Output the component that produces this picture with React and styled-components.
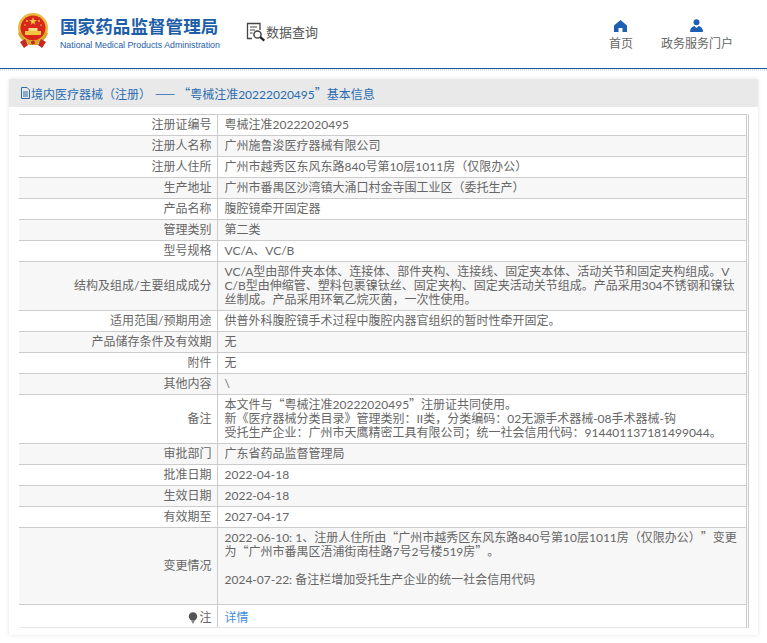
import React from 'react';
import styled, { createGlobalStyle } from 'styled-components';

const GlobalStyle = createGlobalStyle`
  html, body {
    margin: 0;
    padding: 0;
    background: #fff;
    font-family: Lato, "Noto Sans CJK SC", sans-serif;
    font-size: 12px;
    color: #666;
    text-spacing-trim: space-all;
  }
`;

const Page = styled.div`
  width: 767px;
  height: 643px;
  overflow: hidden;
`;

const Header = styled.header`
  height: 68px;
  display: flex;
  align-items: flex-start;
  border-bottom: 1px solid #1f5c9e;
`;

const DottedRule = styled.div`
  height: 2px;
  background: repeating-linear-gradient(90deg, #dfe5ec 0 1px, #fff 1px 2px);
`;

const Brand = styled.div`
  display: flex;
  align-items: flex-start;
  padding: 13px 0 0 17px;
`;

const BrandText = styled.div`
  margin: 2px 0 0 11px;
  display: flex;
  flex-direction: column;
`;

const BrandName = styled.div`
  font-size: 17.6px;
  line-height: 24px;
  font-weight: 700;
  color: #1d5ea8;
  white-space: nowrap;
`;

const BrandEn = styled.div`
  font-family: "Liberation Sans", sans-serif;
  font-size: 8.8px;
  line-height: 12px;
  color: #1d5ea8;
  white-space: nowrap;
`;

const Query = styled.div`
  display: flex;
  align-items: center;
  margin: 22px 0 0 26px;
  font-size: 13px;
  line-height: 20px;
  color: #555;
`;

const Nav = styled.nav`
  margin-left: auto;
  display: flex;
  padding: 19px 34px 0 0;
  gap: 28px;
`;

const NavItem = styled.div`
  display: flex;
  flex-direction: column;
  align-items: center;
  font-size: 12px;
  line-height: 18px;
  color: #666;
`;

const NavIcon = styled.svg`
  display: block;
  width: 13px;
  height: 13px;
  margin-bottom: 3px;
`;

const Panel = styled.section`
  margin: 8px 9px 0 9px;
  height: 556px;
  box-shadow: 0 0 4px rgba(0, 0, 0, 0.12);
  background: #fff;
`;

const PanelTitle = styled.div`
  height: 28px;
  display: flex;
  align-items: center;
  padding-left: 11px;
  background: #e9e9e9;
  color: #2a6cb0;
  font-size: 12px;
`;

const Quote = styled.span`
  font-family: "Noto Sans CJK SC", sans-serif;
  line-height: 0;
`;

const Dash = styled(Quote)`
  margin: 0 3px 0 4px;
`;

const TableWrap = styled.div`
  padding: 7px 10px 0 10px;
`;

const Table = styled.table`
  width: 730px;
  border-collapse: collapse;
  table-layout: fixed;
  border-right: 3px double #ccc;
`;

const Row = styled.tr`
  background: ${({ $striped }) => ($striped ? '#f7f7f7' : '#fff')};
`;

const Label = styled.td`
  width: 198px;
  box-sizing: border-box;
  padding: 3px 5px 3px 0;
  text-align: right;
  line-height: 14px;
  border-top: 1px solid #ccc;
  border-bottom: 1px solid #ccc;
  border-right: 1px solid #ccc;
  vertical-align: middle;
`;

const Value = styled.td`
  padding: 3px 6px 3px 7px;
  line-height: 14px;
  border-top: 1px solid #ccc;
  border-bottom: 1px solid #ccc;
  vertical-align: middle;
  word-break: break-all;
`;

const LastLabel = styled(Label)`
  padding-top: 6px;
  padding-bottom: 2px;
  border-bottom-color: #e6e6e6;
`;

const LastValue = styled(Value)`
  padding-top: 6px;
  padding-bottom: 2px;
  border-bottom-color: #e6e6e6;
`;

const DetailLink = styled.a`
  color: #3f8ede;
  text-decoration: none;
`;

const Bulb = styled.svg`
  width: 10px;
  height: 12px;
  vertical-align: -2px;
  margin-right: 1px;
`;

const Emblem = () => (
  <svg width="32" height="36" viewBox="0 0 32 36">
    <circle cx="16" cy="15" r="15" fill="#e8b93c" />
    <circle cx="16" cy="15" r="12.5" fill="#d8261c" />
    <path d="M16 4l1 3h3l-2.5 2 1 3-2.5-2-2.5 2 1-3L12 7h3z" fill="#f3c640" />
    <circle cx="10" cy="8" r="1" fill="#f3c640" />
    <circle cx="22" cy="8" r="1" fill="#f3c640" />
    <circle cx="8" cy="12" r="0.8" fill="#f3c640" />
    <circle cx="24" cy="12" r="0.8" fill="#f3c640" />
    <rect x="8" y="18" width="16" height="4" fill="#f3c640" />
    <rect x="11.5" y="15" width="9" height="3" fill="#f6dc8a" />
    <path d="M1 20c2 7 8 11 15 11s13-4 15-11l-3-1c-2 6-6 9-12 9S6 25 4 19z" fill="#d9a52e" />
    <path d="M3 29l5-3 3 6-4 3zM29 29l-5-3-3 6 4 3z" fill="#c9281e" />
    <rect x="11" y="27" width="10" height="5" fill="#d9a52e" />
    <circle cx="16" cy="29.5" r="2" fill="#c9281e" />
  </svg>
);

const QueryIcon = () => (
  <svg width="20" height="20" viewBox="0 0 20 20" fill="none" stroke="#444">
    <path d="M14 8V1.5H1.5v15H6" strokeWidth="1.3" />
    <path d="M4 5h7M4 8h5M4 11h2.5" strokeWidth="1.2" />
    <circle cx="11.5" cy="12.5" r="3.6" strokeWidth="1.5" />
    <path d="M14.3 15.2l4 3.5" strokeWidth="2.2" stroke="#222" />
  </svg>
);

const HomeIcon = () => (
  <NavIcon viewBox="0 0 13 13">
    <path d="M6.5 1L0 6.5V13h4.5V9h4v4H13V6.5z" fill="#1d5fb4" />
  </NavIcon>
);

const UserIcon = () => (
  <NavIcon viewBox="0 0 13 13">
    <circle cx="6.5" cy="3.2" r="3" fill="#1d5fb4" />
    <path d="M0 13c0-3 1.5-5.5 4.5-6l2 2 2-2c3 .5 4.5 3 4.5 6z" fill="#1d5fb4" />
  </NavIcon>
);

const FileIcon = () => (
  <svg width="11" height="12" viewBox="0 0 11 12" fill="none" stroke="#2a6cb0" strokeWidth="1">
    <path d="M1.5.5H7L9.5 3v8.5h-8z" />
    <path d="M3 5h5M3 7h5M3 9h5" />
  </svg>
);

const BulbIcon = () => (
  <Bulb viewBox="0 0 10 12">
    <circle cx="5" cy="4.5" r="4.2" fill="#555" />
    <path d="M3 8.5h4L5.5 11.5h-1z" fill="#888" />
  </Bulb>
);

const rows = [
  { label: '注册证编号', value: '粤械注准20222020495' },
  { label: '注册人名称', value: '广州施鲁浚医疗器械有限公司' },
  { label: '注册人住所', value: '广州市越秀区东风东路840号第10层1011房（仅限办公）' },
  { label: '生产地址', value: '广州市番禺区沙湾镇大涌口村金寺围工业区（委托生产）' },
  { label: '产品名称', value: '腹腔镜牵开固定器' },
  { label: '管理类别', value: '第二类' },
  { label: '型号规格', value: 'VC/A、VC/B' },
  {
    label: '结构及组成/主要组成成分',
    value: 'VC/A型由部件夹本体、连接体、部件夹构、连接线、固定夹本体、活动关节和固定夹构组成。VC/B型由伸缩管、塑料包裹镍钛丝、固定夹构、固定夹活动关节组成。产品采用304不锈钢和镍钛丝制成。产品采用环氧乙烷灭菌，一次性使用。',
  },
  { label: '适用范围/预期用途', value: '供普外科腹腔镜手术过程中腹腔内器官组织的暂时性牵开固定。' },
  { label: '产品储存条件及有效期', value: '无' },
  { label: '附件', value: '无' },
  { label: '其他内容', value: '\\' },
  {
    label: '备注',
    value: (
      <>
        本文件与<Quote>“</Quote>粤械注准20222020495<Quote>”</Quote>注册证共同使用。
        <br />
        新《医疗器械分类目录》管理类别：II类，分类编码：02无源手术器械-08手术器械-钩
        <br />
        受托生产企业：广州市天鹰精密工具有限公司；统一社会信用代码：914401137181499044。
      </>
    ),
  },
  { label: '审批部门', value: '广东省药品监督管理局' },
  { label: '批准日期', value: '2022-04-18' },
  { label: '生效日期', value: '2022-04-18' },
  { label: '有效期至', value: '2027-04-17' },
  {
    label: '变更情况',
    value: (
      <>
        2022-06-10: 1、注册人住所由<Quote>“</Quote>广州市越秀区东风东路840号第10层1011房（仅限办公）<Quote>”</Quote>变更为<Quote>“</Quote>广州市番禺区浯浦街南桂路7号2号楼519房<Quote>”</Quote>。
        <br />
        <br />
        2024-07-22: 备注栏增加受托生产企业的统一社会信用代码
        <br />
        <br />
      </>
    ),
  },
];

export default function App() {
  return (
    <Page>
      <GlobalStyle />
      <Header>
        <Brand>
          <Emblem />
          <BrandText>
            <BrandName>国家药品监督管理局</BrandName>
            <BrandEn>National Medical Products Administration</BrandEn>
          </BrandText>
        </Brand>
        <Query>
          <QueryIcon />
          数据查询
        </Query>
        <Nav>
          <NavItem>
            <HomeIcon />
            首页
          </NavItem>
          <NavItem>
            <UserIcon />
            政务服务门户
          </NavItem>
        </Nav>
      </Header>
      <DottedRule />
      <Panel>
        <PanelTitle>
          <FileIcon />
          境内医疗器械（注册）<Dash>——</Dash><Quote>“</Quote>粤械注准20222020495<Quote>”</Quote>基本信息
        </PanelTitle>
        <TableWrap>
          <Table>
            <tbody>
              {rows.map((r, i) => (
                <Row key={r.label} $striped={i % 2 === 1}>
                  <Label>{r.label}</Label>
                  <Value>{r.value}</Value>
                </Row>
              ))}
              <Row>
                <LastLabel>
                  <BulbIcon />注
                </LastLabel>
                <LastValue>
                  <DetailLink href="#">详情</DetailLink>
                </LastValue>
              </Row>
            </tbody>
          </Table>
        </TableWrap>
      </Panel>
    </Page>
  );
}
